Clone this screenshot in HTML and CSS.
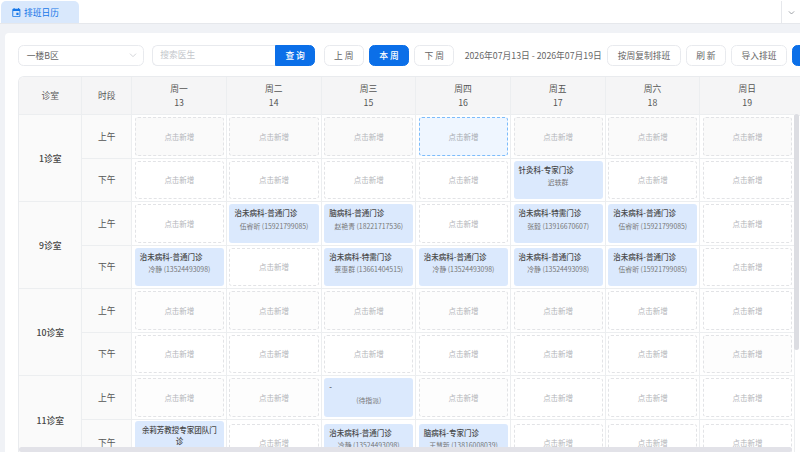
FILE: index.html
```html
<!DOCTYPE html>
<html lang="zh-CN">
<head>
  <meta charset="UTF-8" />
  <meta name="viewport" content="width=device-width, initial-scale=1.0" />
  <title>排班日历</title>
  <link rel="stylesheet" href="styles.css">
</head>
<body>
  <header class="tabbar">
    <div class="tab">
      <svg class="tab-icon" viewBox="0 0 24 24"><path d="M19 4h-1V2h-2v2H8V2H6v2H5a2 2 0 0 0-2 2v14a2 2 0 0 0 2 2h14a2 2 0 0 0 2-2V6a2 2 0 0 0-2-2zm0 16H5V9h14v11zM12 13h5v5h-5z"/></svg>
      <span>排班日历</span>
    </div>
    <div class="tab-more">
      <svg viewBox="0 0 12 12"><path d="M2.5 4.5 6 8l3.5-3.5"/></svg>
    </div>
  </header>

  <main class="page">
    <section class="card">
      <div class="toolbar">
        <div class="select">
          <span>一楼B区</span>
          <svg viewBox="0 0 12 12"><path d="M1.5 4 6 8.5 10.5 4"/></svg>
        </div>
        <div class="search">
          <div class="search-input">搜索医生</div>
          <button class="btn primary search-btn">查 询</button>
        </div>
        <button class="btn week">上 周</button>
        <button class="btn primary week">本 周</button>
        <button class="btn week">下 周</button>
        <div class="range">2026年07月13日 - 2026年07月19日</div>
        <button class="btn copy">按周复制排班</button>
        <button class="btn refresh">刷 新</button>
        <button class="btn import">导入排班</button>
        <button class="btn primary extra"></button>
      </div>

      <div class="schedule">
        <div class="grid">
          <div class="head">诊室</div>
          <div class="head">时段</div>
          <div class="head"><span>周一</span><span>13</span></div>
          <div class="head"><span>周二</span><span>14</span></div>
          <div class="head"><span>周三</span><span>15</span></div>
          <div class="head"><span>周四</span><span>16</span></div>
          <div class="head"><span>周五</span><span>17</span></div>
          <div class="head"><span>周六</span><span>18</span></div>
          <div class="head"><span>周日</span><span>19</span></div>

          <!-- 1诊室 -->
          <div class="room">1诊室</div>
          <div class="period">上午</div>
          <div class="cell"><div class="slot">点击新增</div></div>
          <div class="cell"><div class="slot">点击新增</div></div>
          <div class="cell"><div class="slot">点击新增</div></div>
          <div class="cell"><div class="slot hover">点击新增</div></div>
          <div class="cell"><div class="slot">点击新增</div></div>
          <div class="cell"><div class="slot">点击新增</div></div>
          <div class="cell"><div class="slot">点击新增</div></div>
          <div class="period">下午</div>
          <div class="cell"><div class="slot">点击新增</div></div>
          <div class="cell"><div class="slot">点击新增</div></div>
          <div class="cell"><div class="slot">点击新增</div></div>
          <div class="cell"><div class="slot">点击新增</div></div>
          <div class="cell"><div class="shift"><b>针灸科-专家门诊</b><small>迟轶群</small></div></div>
          <div class="cell"><div class="slot">点击新增</div></div>
          <div class="cell"><div class="slot">点击新增</div></div>

          <!-- 9诊室 -->
          <div class="room">9诊室</div>
          <div class="period">上午</div>
          <div class="cell"><div class="slot">点击新增</div></div>
          <div class="cell"><div class="shift"><b>治未病科-普通门诊</b><small>伍睿昕 (15921799085)</small></div></div>
          <div class="cell"><div class="shift"><b>脑病科-普通门诊</b><small>赵艳青 (18221717536)</small></div></div>
          <div class="cell"><div class="slot">点击新增</div></div>
          <div class="cell"><div class="shift"><b>治未病科-特需门诊</b><small>张毅 (13916670607)</small></div></div>
          <div class="cell"><div class="shift"><b>治未病科-普通门诊</b><small>伍睿昕 (15921799085)</small></div></div>
          <div class="cell"><div class="slot">点击新增</div></div>
          <div class="period">下午</div>
          <div class="cell"><div class="shift"><b>治未病科-普通门诊</b><small>冷静 (13524493098)</small></div></div>
          <div class="cell"><div class="slot">点击新增</div></div>
          <div class="cell"><div class="shift"><b>治未病科-特需门诊</b><small>蔡惠群 (13661404515)</small></div></div>
          <div class="cell"><div class="shift"><b>治未病科-普通门诊</b><small>冷静 (13524493098)</small></div></div>
          <div class="cell"><div class="shift"><b>治未病科-普通门诊</b><small>冷静 (13524493098)</small></div></div>
          <div class="cell"><div class="shift"><b>治未病科-普通门诊</b><small>伍睿昕 (15921799085)</small></div></div>
          <div class="cell"><div class="slot">点击新增</div></div>

          <!-- 10诊室 -->
          <div class="room">10诊室</div>
          <div class="period">上午</div>
          <div class="cell"><div class="slot">点击新增</div></div>
          <div class="cell"><div class="slot">点击新增</div></div>
          <div class="cell"><div class="slot">点击新增</div></div>
          <div class="cell"><div class="slot">点击新增</div></div>
          <div class="cell"><div class="slot">点击新增</div></div>
          <div class="cell"><div class="slot">点击新增</div></div>
          <div class="cell"><div class="slot">点击新增</div></div>
          <div class="period">下午</div>
          <div class="cell"><div class="slot">点击新增</div></div>
          <div class="cell"><div class="slot">点击新增</div></div>
          <div class="cell"><div class="slot">点击新增</div></div>
          <div class="cell"><div class="slot">点击新增</div></div>
          <div class="cell"><div class="slot">点击新增</div></div>
          <div class="cell"><div class="slot">点击新增</div></div>
          <div class="cell"><div class="slot">点击新增</div></div>

          <!-- 11诊室 -->
          <div class="room">11诊室</div>
          <div class="period">上午</div>
          <div class="cell"><div class="slot">点击新增</div></div>
          <div class="cell"><div class="slot">点击新增</div></div>
          <div class="cell"><div class="shift"><b>-</b><small>(待指派)</small></div></div>
          <div class="cell"><div class="slot">点击新增</div></div>
          <div class="cell"><div class="slot">点击新增</div></div>
          <div class="cell"><div class="slot">点击新增</div></div>
          <div class="cell"><div class="slot">点击新增</div></div>
          <div class="period">下午</div>
          <div class="cell"><div class="shift tall"><b>余莉芳教授专家团队门诊</b></div></div>
          <div class="cell"><div class="slot">点击新增</div></div>
          <div class="cell"><div class="shift"><b>治未病科-普通门诊</b><small>冷静 (13524493098)</small></div></div>
          <div class="cell"><div class="shift"><b>脑病科-专家门诊</b><small>王慧新 (13816008039)</small></div></div>
          <div class="cell"><div class="slot">点击新增</div></div>
          <div class="cell"><div class="slot">点击新增</div></div>
          <div class="cell"><div class="slot">点击新增</div></div>
        </div>
        <div class="scroll-y"></div>
        <div class="scroll-x"></div>
      </div>
    </section>
  </main>
</body>
</html>
```

FILE: styles.css
```css
* {
  box-sizing: border-box;
}

html,
body {
  height: 100%;
}

body {
  margin: 0;
  display: flex;
  flex-direction: column;
  overflow: hidden;
  background-color: #f0f2f6;
  color: #4a4a4a;
  font-family: "Noto Sans CJK SC", "Noto Sans", sans-serif;
  font-size: 8.75px;
}

.tabbar {
  flex: none;
  display: flex;
  justify-content: space-between;
  height: 24px;
  padding: 1px 0 0 1px;
  background-color: white;
  border-bottom: 1px solid #e6e8ec;
}

.tab {
  display: flex;
  align-items: center;
  gap: 2.6px;
  width: 78.3px;
  height: 22px;
  padding-left: 9.7px;
  color: #1677e8;
  background-color: #d9e8fc;
  border-radius: 5px 5px 0 0;
}

.tab-icon {
  width: 10.7px;
  height: 10.7px;
  fill: #1677e8;
}

.tab-more {
  display: flex;
  align-items: center;
  justify-content: center;
  width: 19px;
  height: 22px;
  border-left: 1px solid #e6e8ec;
}

.tab-more svg {
  width: 9px;
  height: 9px;
  fill: none;
  stroke: #80858c;
  stroke-width: 1;
}

.page {
  flex: 1;
  min-height: 0;
  padding: 9px 0 0 5px;
}

.card {
  height: 100%;
  padding: 12.3px 0 0 13.3px;
  overflow: hidden;
  background-color: white;
  border-radius: 4px 0 0 0;
}

.toolbar {
  display: flex;
  align-items: center;
  height: 20.3px;
  width: 850px;
}

.select {
  flex: none;
  display: flex;
  align-items: center;
  justify-content: space-between;
  width: 125.7px;
  height: 100%;
  padding: 0 6px 0 7.5px;
  margin-right: 8.3px;
  color: #666;
  border: 1px solid #e8eaee;
  border-radius: 5.5px;
}

.select svg {
  width: 8px;
  height: 8px;
  fill: none;
  stroke: #bcc0c6;
  stroke-width: 1;
}

.search {
  flex: none;
  display: flex;
  height: 100%;
  margin-right: 8.4px;
}

.search-input {
  width: 122.7px;
  padding-left: 7px;
  line-height: 18px;
  color: #c4c7cc;
  border: 1px solid #e8eaee;
  border-right: none;
  border-radius: 5.5px 0 0 5.5px;
}

.btn {
  flex: none;
  height: 100%;
  padding: 0;
  font: inherit;
  color: #666;
  background-color: white;
  border: 1px solid #e8eaee;
  border-radius: 5.5px;
}

.btn.primary {
  font-weight: 500;
  color: white;
  background-color: #0b6fe8;
  border-color: #0b6fe8;
}

.search-btn.primary {
  width: 40.3px;
  border-radius: 0 5.5px 5.5px 0;
}

.week {
  width: 40px;
  margin-right: 5.3px;
}

.range {
  flex: none;
  width: 137.2px;
  margin: 0 5.5px 0 5.1px;
  color: #666;
  white-space: nowrap;
}

.copy {
  width: 73.4px;
  margin-right: 5.3px;
}

.refresh {
  width: 39.7px;
  margin-right: 5.6px;
}

.import {
  width: 55.4px;
  margin-right: 5px;
}

.extra {
  width: 60px;
}

.schedule {
  position: relative;
  margin-top: 10.4px;
  height: 376px;
  overflow: hidden;
  border-top: 1px solid #e9ebee;
  border-left: 1px solid #e9ebee;
  border-radius: 6px 0 0 0;
}

/* header strip carries on above the scrollbar */
.schedule::before {
  content: "";
  position: absolute;
  top: 0;
  right: 0;
  width: 6px;
  height: 38.2px;
  background-color: #f5f5f6;
  border-bottom: 1px solid #eceef0;
}

.grid {
  display: grid;
  grid-template-columns: 62.9px 50px repeat(7, 94.7px);
  grid-template-rows: 38.2px repeat(7, 43.5px) 47px;
  width: 775.8px;
}

.head,
.room,
.period,
.cell {
  border-right: 1px solid #eceef0;
  border-bottom: 1px solid #eceef0;
}

.head {
  display: flex;
  flex-direction: column;
  align-items: center;
  justify-content: center;
  gap: 2px;
  line-height: 12px;
  color: #555;
  background-color: #f5f5f6;
}

.room {
  grid-row: span 2;
  display: flex;
  align-items: center;
  justify-content: center;
  font-weight: 500;
  color: #444;
  background-color: #fafafa;
}

.period {
  display: flex;
  align-items: center;
  justify-content: center;
  color: #555;
  background-color: #fafafa;
}

.cell {
  display: flex;
  align-items: center;
  min-width: 0;
  padding: 2px 1.9px 2px 2.6px;
}

.slot {
  flex: 1;
  display: flex;
  align-items: center;
  justify-content: center;
  height: 38.3px;
  font-size: 7.5px;
  color: #b4b6ba;
  border: 1px dashed #e2e3e6;
  border-radius: 3px;
}

/* 1诊室 上午 runs slightly grey, 10/11诊室 上午 fainter */
.cell:nth-child(n+12):nth-child(-n+18) .slot {
  background-color: #fafafa;
}

.cell:nth-child(n+44):nth-child(-n+50) .slot,
.cell:nth-child(n+60):nth-child(-n+66) .slot {
  background-color: #fdfdfd;
}

.cell:nth-child(n+12):nth-child(-n+18) .slot.hover {
  color: #a8acb2;
  background-color: #eff6ff;
  border: 1px dashed #7cbcfb;
}

.shift {
  flex: 1;
  min-width: 0;
  display: flex;
  flex-direction: column;
  align-items: center;
  height: 38.3px;
  padding: 4px 5px 0;
  overflow: hidden;
  background-color: #dbe9fd;
  border-radius: 3px;
}

.shift.tall {
  height: 42.7px;
  text-align: center;
}

.shift b {
  align-self: flex-start;
  font-size: 7.5px;
  font-weight: 500;
  line-height: 10.7px;
  color: #484848;
}

.shift small {
  margin-top: 2px;
  font-size: 6.875px;
  line-height: 10.6px;
  color: #777;
}

.scroll-y {
  position: absolute;
  top: 37px;
  right: 1px;
  width: 5px;
  height: 236px;
  background-color: #dcdde2;
  border-radius: 3px;
}

.scroll-x {
  position: absolute;
  left: 0;
  bottom: 0;
  width: 772.4px;
  height: 4.7px;
  background-color: #e2e2e8;
  border-radius: 3px;
}
```
